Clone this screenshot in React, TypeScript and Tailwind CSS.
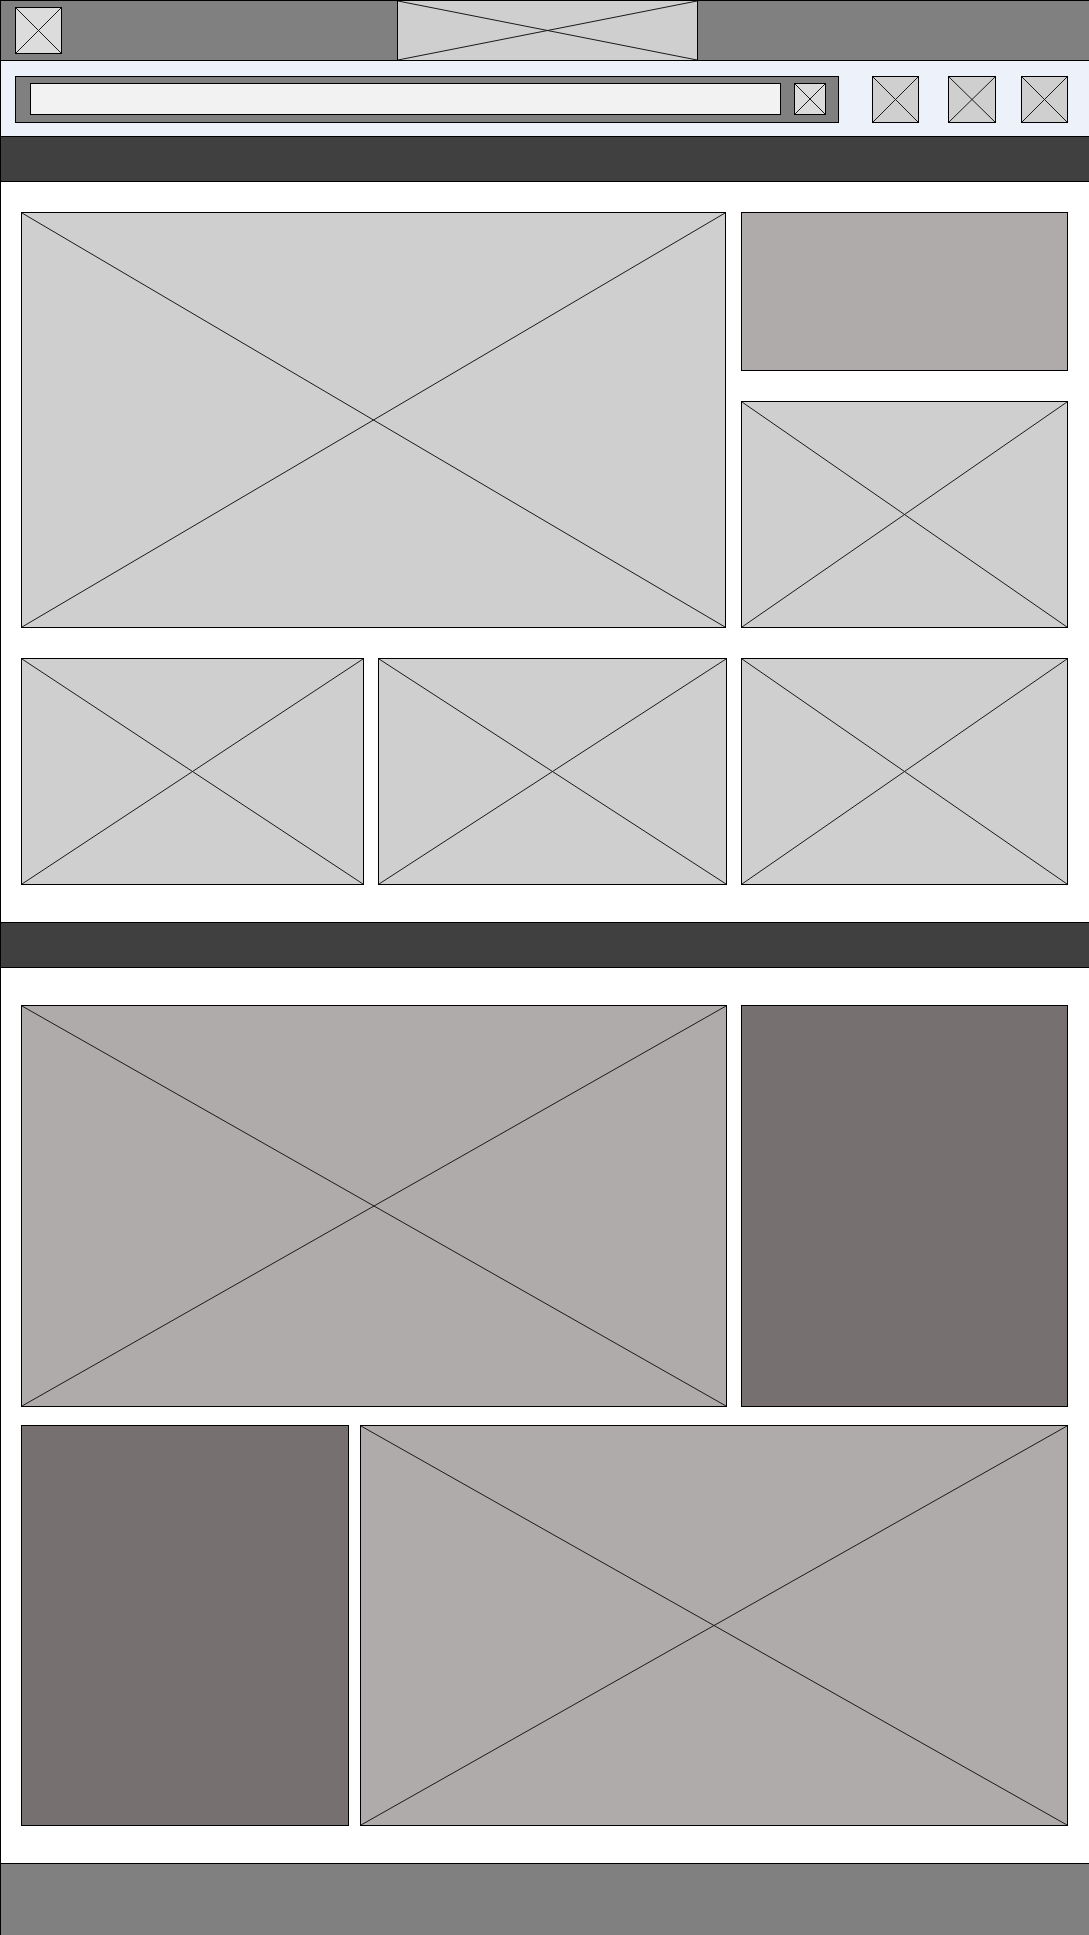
import React from 'react';

// Wireframe placeholder: a bordered box with a cross through it
function Placeholder({ className = '' }: { className?: string }) {
  return (
    <div className={`relative border border-black ${className}`}>
      <svg
        className="absolute inset-0 h-full w-full"
        viewBox="0 0 100 100"
        preserveAspectRatio="none"
      >
        <line x1="0" y1="0" x2="100" y2="100" stroke="#1a1a1a" strokeWidth="1" vectorEffect="non-scaling-stroke" />
        <line x1="100" y1="0" x2="0" y2="100" stroke="#1a1a1a" strokeWidth="1" vectorEffect="non-scaling-stroke" />
      </svg>
    </div>
  );
}

function Block({ className = '' }: { className?: string }) {
  return <div className={`border border-black ${className}`} />;
}

export default function App() {
  return (
    <div className="w-[1089px] min-h-[1935px] border-l border-black bg-white flex flex-col">
      {/* Header */}
      <header className="h-[61px] border-y border-black bg-[#808080] flex items-start">
        <Placeholder className="ml-[14px] mt-[6px] h-[47px] w-[47px] bg-[#dcdcdc]" />
        <Placeholder className="ml-[335px] -mt-px h-[61px] w-[301px] bg-[#d0cfd0]" />
      </header>

      {/* Search row */}
      <div className="h-[75px] bg-[#edf1fa] flex items-start pt-[15px]">
        <div className="ml-[14px] h-[47px] w-[824px] border border-black bg-[#808080] flex items-start pt-[6px] pl-[14px]">
          <div className="h-[32px] w-[751px] border border-black bg-[#f2f2f2]" />
          <Placeholder className="ml-[13px] h-[32px] w-[32px] bg-[#dcdcdc]" />
        </div>
        <Placeholder className="ml-[33px] h-[47px] w-[47px] bg-[#d0cfd0]" />
        <Placeholder className="ml-[29px] h-[47px] w-[48px] bg-[#d0cfd0]" />
        <Placeholder className="ml-[25px] h-[47px] w-[47px] bg-[#d0cfd0]" />
      </div>

      {/* Nav bar */}
      <div className="h-[46px] border-y border-black bg-[#404040]" />

      {/* Section 1 */}
      <section className="px-[20px] pt-[30px] pb-[37px] flex flex-col gap-[30px]">
        <div className="flex gap-[15px]">
          <Placeholder className="h-[416px] w-[705px] bg-[#d0cfd0]" />
          <div className="flex w-[327px] flex-col gap-[30px]">
            <Block className="h-[159px] bg-[#afabaa]" />
            <Placeholder className="h-[227px] bg-[#d0cfd0]" />
          </div>
        </div>
        <div className="flex">
          <Placeholder className="h-[227px] w-[343px] bg-[#d0cfd0]" />
          <Placeholder className="ml-[14px] h-[227px] w-[349px] bg-[#d0cfd0]" />
          <Placeholder className="ml-[14px] h-[227px] w-[327px] bg-[#d0cfd0]" />
        </div>
      </section>

      {/* Nav bar 2 */}
      <div className="h-[46px] border-y border-black bg-[#404040]" />

      {/* Section 2 */}
      <section className="px-[20px] pt-[37px] pb-[37px] flex flex-col gap-[18px]">
        <div className="flex gap-[14px]">
          <Placeholder className="h-[402px] w-[706px] bg-[#afabaa]" />
          <Block className="h-[402px] w-[327px] bg-[#767070]" />
        </div>
        <div className="flex gap-[11px]">
          <Block className="h-[401px] w-[328px] bg-[#767070]" />
          <Placeholder className="h-[401px] w-[708px] bg-[#afabaa]" />
        </div>
      </section>

      {/* Footer */}
      <footer className="flex-1 min-h-[72px] border-t border-black bg-[#808080]" />
    </div>
  );
}
